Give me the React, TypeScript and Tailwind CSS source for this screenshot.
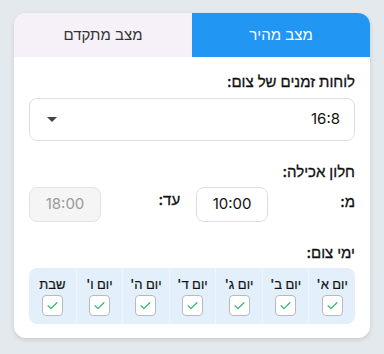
const days = ["יום א'", "יום ב'", "יום ג'", "יום ד'", "יום ה'", "יום ו'", 'שבת'];

const Check = () => (
  <svg viewBox="0 0 24 24" className="w-[15px] h-[15px]" fill="none" stroke="#2eb872" strokeWidth="2" strokeLinecap="round" strokeLinejoin="round">
    <path d="M5 12.5l4.5 4.5L19 7.5" />
  </svg>
);

export default function App() {
  return (
    <div
      dir="rtl"
      className="min-h-screen bg-[#e4e9ee] px-[14px] pt-[13px] text-[#111]"
      style={{ fontFamily: "Inter, 'Liberation Sans', Arial, sans-serif" }}
    >
      <div className="rounded-[12px] bg-white shadow-[0_2px_5px_rgba(0,0,0,0.12)] overflow-hidden">
        <div className="flex h-[44px] text-[15px]">
          <button className="flex-1 bg-[#2196f3] text-white">מצב מהיר</button>
          <button className="flex-1 bg-[#f6f1f8] text-[#333]">מצב מתקדם</button>
        </div>

        <div className="px-[15px] pt-[16px] pb-[14px]">
          <div className="text-[15px] font-medium leading-[18px] [-webkit-text-stroke:0.3px_#111]">לוחות זמנים של צום:</div>
          <div className="mt-[7px] h-[43px] rounded-[8px] border border-[#dedede] flex items-center justify-between px-[14px] text-[15px]">
            <span>16:8</span>
            <span className="w-0 h-0 border-l-[5px] border-r-[5px] border-t-[5px] border-l-transparent border-r-transparent border-t-[#444] ml-[3px]" />
          </div>

          <div className="mt-[22px] text-[15px] font-medium leading-[18px] [-webkit-text-stroke:0.3px_#111]">חלון אכילה:</div>
          <div className="mt-[6px] flex items-start h-[35px]">
            <span className="text-[15px] font-medium pt-[4px] [-webkit-text-stroke:0.3px_#111]">מ:</span>
            <div className="mr-[72px] w-[72px] h-[35px] rounded-[8px] border border-[#dedede] flex items-center justify-center text-[15px]">10:00</div>
            <span className="mr-[16px] text-[15px] font-medium pt-[2px] [-webkit-text-stroke:0.3px_#111]">עד:</span>
            <div className="mr-auto w-[72px] h-[35px] rounded-[8px] border border-[#e2e2e2] bg-[#f5f5f5] flex items-center justify-center text-[15px] text-[#9a9a9a]">18:00</div>
          </div>

          <div className="mt-[22px] text-[15px] font-medium leading-[18px] [-webkit-text-stroke:0.3px_#111]">ימי צום:</div>
          <div className="mt-[6px] h-[56px] rounded-[8px] bg-[#e3f0fb] grid grid-cols-7">
            {days.map((d, i) => (
              <div
                key={d}
                className={`flex flex-col items-center pt-[9px] ${i < 6 ? 'border-l border-[#eef5fc]' : ''}`}
              >
                <span className="text-[13px] font-medium leading-[15px] [-webkit-text-stroke:0.2px_#111]">{d}</span>
                <span className="mt-[3px] w-[21px] h-[21px] rounded-[4px] border border-[#b9b9b9] bg-white flex items-center justify-center">
                  <Check />
                </span>
              </div>
            ))}
          </div>
        </div>
      </div>
    </div>
  );
}
